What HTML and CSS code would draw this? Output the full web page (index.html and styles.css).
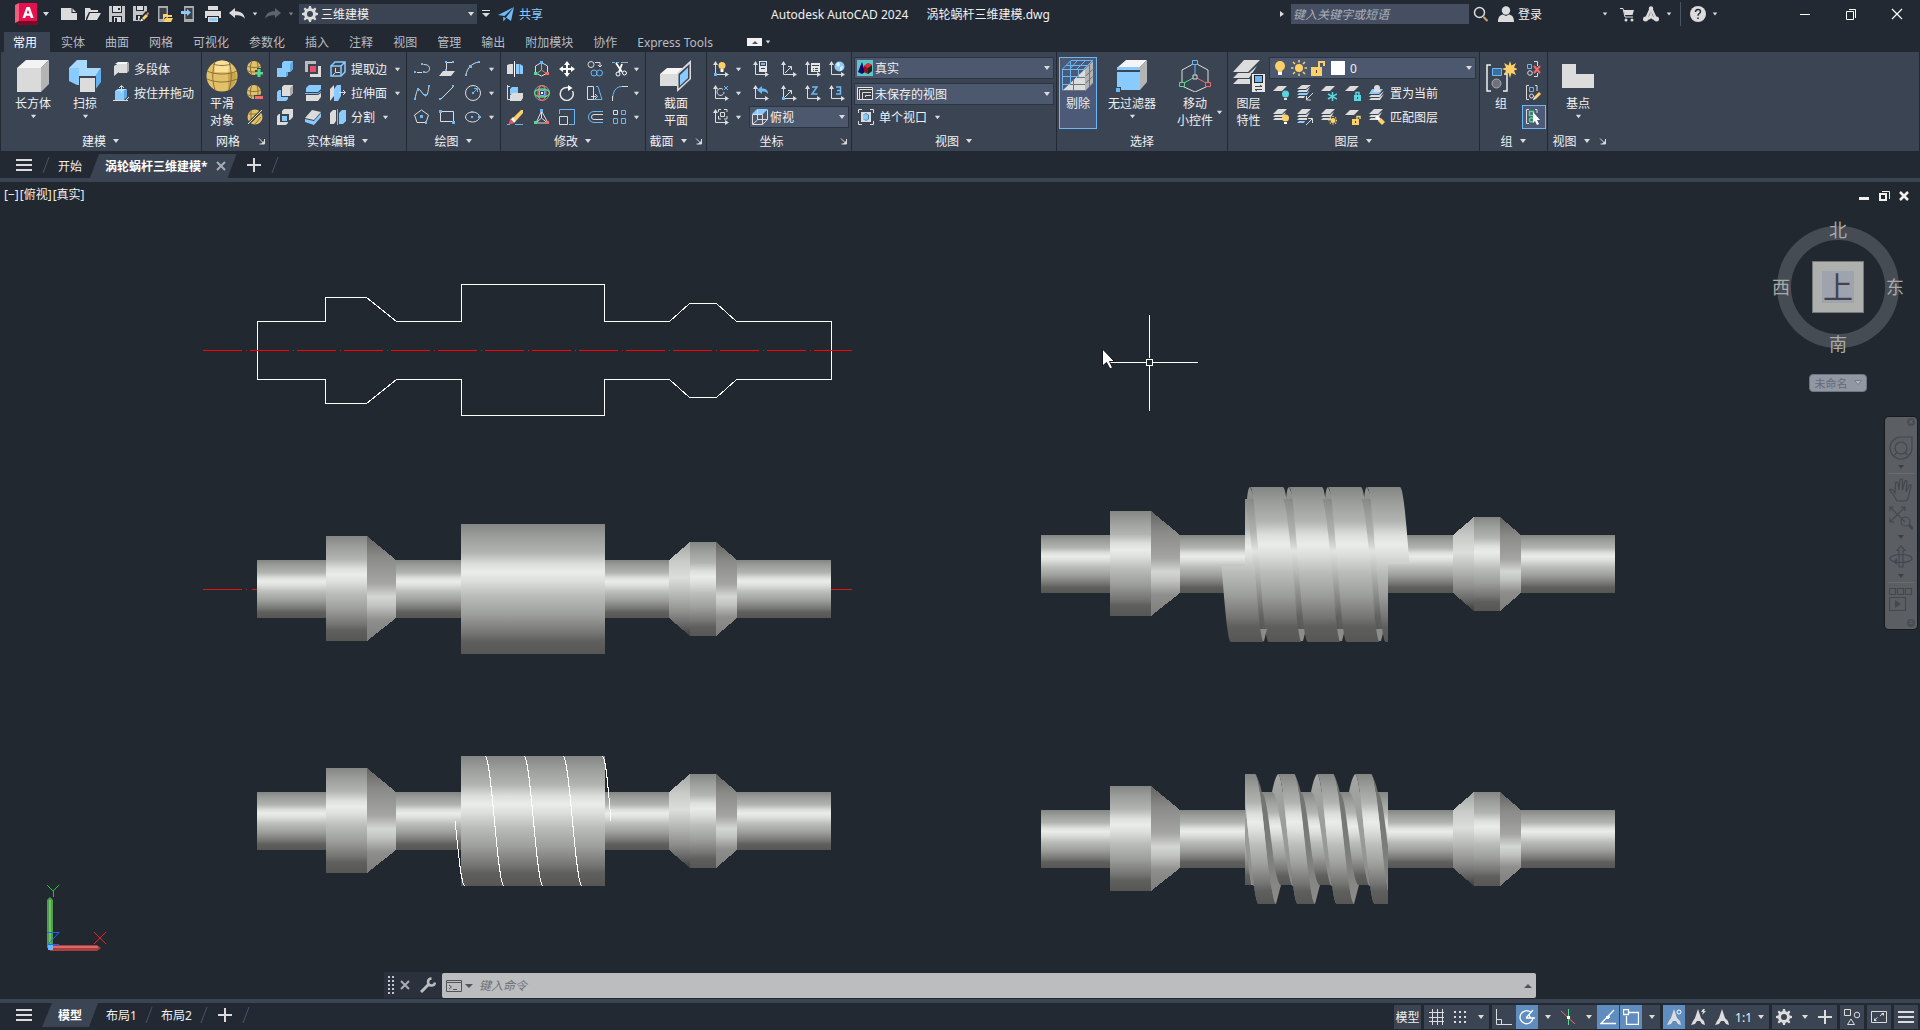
FILE: index.html
```html
<!DOCTYPE html>
<html lang="zh-CN">
  <head>
    <meta charset="utf-8" />
    <title>Autodesk AutoCAD 2024 涡轮蜗杆三维建模.dwg</title>
    <link rel="stylesheet" href="styles.css" />
  </head>
  <body>
    <!-- icon sprite -->
    <svg class="sprite" aria-hidden="true">
      <symbol id="arrow" viewBox="0 0 8 8"><path class="fw" d="M1 2h6L4 6z" /></symbol>
      <symbol id="arrow-up" viewBox="0 0 8 8"><path fill="#50545c" d="M0 6h8L4 2z" /></symbol>
      <symbol id="launcher" viewBox="0 0 8 8"><path class="sw" d="M1 1.500l5 5M6.500 2v5h-5" /><path class="fw" d="M7 3v4H3z" /></symbol>
      <symbol id="menu" viewBox="0 0 16 16"><path class="fw" d="M0 2h16v2H0zM0 7h16v2H0zM0 12h16v2H0z" /></symbol>
      <symbol id="plus" viewBox="0 0 16 16"><path class="fw" d="M7 1h2v6h6v2H9v6H7V9H1V7h6z" /></symbol>
      <symbol id="slash" viewBox="0 0 8 16"><path stroke="#4b5464" fill="none" d="M7 0L1 16" /></symbol>
      <symbol id="close" viewBox="0 0 16 16"><path stroke="#a9adb3" stroke-width="2" d="M4 4l8 8M12 4l-8 8" /></symbol>
      <symbol id="gear" viewBox="0 0 16 16">
        <path class="fw" fill-rule="evenodd" d="M7 0h2l.5 2.200 1.700.700L13 1.600 14.400 3 13.100 4.800l.700 1.700L16 7v2l-2.200.500-.700 1.700 1.300 1.800-1.400 1.400-1.800-1.300-1.700.700L9 16H7l-.5-2.200-1.700-.700L3 14.400 1.600 13l1.300-1.800-.700-1.700L0 9V7l2.200-.500.700-1.700L1.600 3 3 1.600l1.800 1.300 1.700-.700zM8 5a3 3 0 1 0 0 6 3 3 0 0 0 0-6z" />
      </symbol>

      <!-- quick access -->
      <symbol id="logo" viewBox="0 0 24 22">
        <path fill="#7a0a26" d="M2 19l5-17h16v20H3z" />
        <path fill="#f0607c" d="M0 2l4-2v18l-4 2z" />
        <path fill="#e51050" d="M4 0h18v18H4z" />
        <path fill="#fff" fill-rule="evenodd" d="M11.500 4h3.200l4 11h-3l-.7-2.200h-4L10.300 15H7.500zM13 6.500L11.700 10.600h2.700z" />
      </symbol>
      <symbol id="new" viewBox="0 0 16 16"><path class="fw" d="M0 2h11l5 5v7H0z" /><path fill="#222933" d="M10.500 2v5H16v-1h-4.500V2z" /></symbol>
      <symbol id="open" viewBox="0 0 16 16"><path class="fw" d="M0 2h5l1 2h7v2H4L1 12v2H0zM5 7h11l-4 7H2z" /></symbol>
      <symbol id="save" viewBox="0 0 16 16"><path fill="#c3c5c8" d="M0 0h16v16H0z" /><path fill="#222933" d="M3 0h10v7H3zM3 10h10v6H3z" /><path class="fw" d="M4 0h8v6H4zM5 11h7v5H5z" /><path fill="#222933" d="M9 2h2v2H9zM6 12h2v4H6z" /></symbol>
      <symbol id="saveas" viewBox="0 0 16 16"><path fill="#c3c5c8" d="M0 0h14v9l-6 6H0z" /><path fill="#222933" d="M3 0h8v5H3zM3 9h6v5H3z" /><path class="fw" d="M4 0h6v4H4zM5 10h2v4H5z" /><path fill="#222933" d="M6 13l7-8 4 3-8 9z" /><path class="fy" d="M9 12l4-4 2 2-4 4z" /><path fill="#f17a7a" d="M13.500 7.500L15 6l1 1.500-1.500 2z" /><path fill="#fff" d="M7 15.500l1.500-3 2 2z" /></symbol>
      <symbol id="webopen" viewBox="0 0 16 16"><path fill="#a9abad" d="M1 0h10v16H1z" /><path fill="#3c4149" d="M2.500 2h7v11h-7z" /><path class="fy" d="M6 8h4l1 1h4v2h-7l-2 4zM8.500 12H16l-2 4H6.500z" /></symbol>
      <symbol id="websave" viewBox="0 0 16 16"><path fill="#a9abad" d="M3 0h10v16H3z" /><path fill="#3c4149" d="M4.500 2h7v11h-7z" /><path class="fb" d="M0 5h6V3l4 3.500L6 10V8H0z" /></symbol>
      <symbol id="print" viewBox="0 0 16 16"><path class="fw" d="M3 0h10v4H3zM0 5h16v7h-2v-2H2v2H0z" /><path class="fw" d="M3 11h10v5H3z" /><path class="fb" d="M4 12h8v3H4z" /></symbol>
      <symbol id="undo" viewBox="0 0 16 16"><path class="fw" d="M0 7l6-5v3.300c6 0 9 2 10 7.700-2-3-4.500-4-10-3.800V12z" /></symbol>
      <symbol id="redo" viewBox="0 0 16 16"><path fill="#5e646d" d="M16 7l-6-5v3.300C4 5.300 1 7.300 0 13c2-3 4.500-4 10-3.800V12z" /></symbol>
      <symbol id="qatmenu" viewBox="0 0 8 8"><path class="fw" d="M0 0h8v1H0zM0 3h8L4 7z" /></symbol>
      <symbol id="plane" viewBox="0 0 16 16"><path fill="#6fbbf7" d="M0 9L16 1 6.500 10zM16 1l-3 14-5-3.500zM5 11l3 1-2.500 3.500z" /></symbol>
      <symbol id="search" viewBox="0 0 16 16"><circle cx="6.500" cy="6.500" r="5" fill="none" stroke="#dcdcdc" stroke-width="1.500" /><path stroke="#c8a86a" stroke-width="2" d="M10.500 11l4 4" /></symbol>
      <symbol id="user" viewBox="0 0 16 16"><circle cx="8" cy="4.500" r="4.200" class="fw" /><path class="fw" d="M0 16c0-5 2-7 5-7.500l3 1.500 3-1.500c3 .5 5 2.500 5 7.500z" /></symbol>
      <symbol id="cart" viewBox="0 0 16 16"><path class="sw" d="M1 2.500h3l2 8.500h8" /><path class="fw" d="M4.500 4H15l-1.500 5H6z" /><circle cx="7" cy="14" r="1.500" class="fw" /><circle cx="13" cy="14" r="1.500" class="fw" /></symbol>
      <symbol id="alogo" viewBox="0 0 16 16"><path fill="none" stroke="#dcdcdc" stroke-width="2.500" d="M8 2L3 13M8 2l5 11M2 13c4 0 5-1 6-4 1 3 2 4 6 4" /><circle cx="8" cy="2.500" r="2.200" class="fw" /><circle cx="2.500" cy="13" r="2.500" class="fw" /><circle cx="13.500" cy="13" r="2.500" class="fw" /></symbol>
      <symbol id="help" viewBox="0 0 16 16"><circle cx="8" cy="8" r="8" class="fw" /><path fill="none" stroke="#222933" stroke-width="1.500" d="M5.500 6c0-3.500 5-3.300 5-.5 0 2-2.500 2-2.500 4.200M8 11.500V13" /></symbol>
      <symbol id="win-min" viewBox="0 0 16 16"><path stroke="#fff" d="M3 8.500h10" /></symbol>
      <symbol id="win-restore" viewBox="0 0 16 16"><path fill="none" stroke="#fff" d="M3.500 5.500h7v8h-7zM6 3.500h6.500V12" /></symbol>
      <symbol id="win-close" viewBox="0 0 16 16"><path stroke="#fff" stroke-width="1.200" d="M3 3l10 10M13 3L3 13" /></symbol>

      <!-- modeling panel -->
      <symbol id="box" viewBox="0 0 32 32"><path fill="#f3f3f3" d="M0 8L9 0h23l-8 8z" /><path fill="#dadada" d="M0 8h24v24H0z" /><path fill="#b4b4b4" d="M24 8l8-8v24l-8 8z" /></symbol>
      <symbol id="sweep" viewBox="0 0 32 32"><path fill="#a9d9ff" d="M0 8L8 0h10v8h14l-6 9H10L0 10z" /><path fill="#8acbff" d="M0 8h10v9h16v12h-6v-4H8L0 21z" /><path fill="#63b0ee" d="M26 17l6-9v14l-6 8z" /><path fill="#3b4453" d="M10 16h17v16H10z" /><path class="fw" d="M11 18h15v14H11z" /></symbol>
      <symbol id="polysolid" viewBox="0 0 16 16"><path class="fw" d="M1 5l5-3v9l-5 4zM6 3h8v9H6z" /><path fill="#f5f5f5" d="M2 3l3-2h10l-1 2H6z" /><path fill="#aaa" d="M14 3l2-2v9l-2 2z" /></symbol>
      <symbol id="presspull" viewBox="0 0 16 16"><path class="fb" d="M2 6h9v9H2z" /><path fill="#b5deff" d="M2 6l3-2h9l-3 2z" /><path fill="#5fa9e4" d="M11 6l3-2v8l-3 3z" /><path class="sw" d="M8.500 8V0.500M6 3l2.500-2.500L11 3M0 15.500h15M13 15l3-3" /></symbol>

      <!-- mesh -->
      <symbol id="sphere" viewBox="0 0 32 32"><circle cx="16" cy="16" r="15.500" fill="#e3c168" /><path fill="#fbe09a" d="M8 3a15 15 0 0 1 16 0l-2 9H9z" /><path fill="#c9a550" d="M22 12l8 1a15 15 0 0 1-8 17z" /><path fill="none" stroke="#8a7238" d="M1 11c8 4 22 4 30 0M1 19c9 4 21 4 30 0M9 2C6 12 6 20 9 30M23 2c3 10 3 18 0 28M7 4c6 2 12 2 18 0" /></symbol>
      <symbol id="ball" viewBox="0 0 16 16"><circle cx="7" cy="7" r="7" fill="#e3c168" /><path fill="none" stroke="#8a7238" d="M0 5c4 2 10 2 14 0M0 9.500c4 2 10 2 14 0M4.500 1c-1.500 4-1.500 8 0 12M10 1c1.500 4 1.500 8 0 12" /></symbol>
      <symbol id="mesh-more" viewBox="0 0 16 16"><use href="#ball" width="16" height="16" /><path fill="#3b4453" d="M8 9h2V7h4v2h2v6H8z" /><path fill="#5bd98a" d="M10.500 8h3v3H16v2.500h-2.500V16h-3v-2.500H8V11h2.500z" /></symbol>
      <symbol id="mesh-less" viewBox="0 0 16 16"><use href="#ball" width="16" height="16" /><path fill="#3b4453" d="M7 10h9v5H7z" /><path fill="#f56a6a" d="M8 11h8v3H8z" /></symbol>
      <symbol id="mesh-ref" viewBox="0 0 16 16"><circle cx="8" cy="8" r="7.500" fill="#e3c168" /><path stroke="#8a7238" d="M2 5h7M4 1v9M5 13l8-8M8 15l6-7" /><path stroke="#3b4453" stroke-width="3" d="M1 15L15 1" /><path stroke="#fbe09a" d="M1 15L15 1" /></symbol>

      <!-- solid editing -->
      <symbol id="union" viewBox="0 0 16 16"><path class="fb" d="M0 7h5V2l2-2h9v8l-3 3h-2v3l-2 2H0z" /><path fill="#5fa9e4" d="M16 0v8l-3 3V3zM10 11h1v3l-2 2V11z" /></symbol>
      <symbol id="subtract" viewBox="0 0 16 16"><path class="fb" d="M0 7l2-2h9v9l-2 2H0z" /><path fill="#3b4453" d="M4 2h9v10H4z" /><path class="fw" d="M5 2l2-2h9v8l-3 3H5z" /><path fill="#aaa" d="M13 3l3-3v8l-3 3z" /></symbol>
      <symbol id="intersect" viewBox="0 0 16 16"><path class="fw" d="M0 7l2-2h9v9l-2 2H0zM5 2l2-2h9v8l-3 3H5z" /><path fill="#3b4453" d="M3 5h9v8H3z" /><path class="fb" d="M5 7h5v5H5z" /></symbol>
      <symbol id="interfere" viewBox="0 0 16 16"><path fill="#b9bbbd" d="M0 0h11v11H0z" /><path fill="#dcdcdc" d="M5 5h11v11H5z" /><path fill="#3b4453" d="M3 3h10v10H3z" /><path fill="#e8506a" d="M5 5h6v6H5z" /></symbol>
      <symbol id="slice" viewBox="0 0 16 16"><path class="fb" d="M1 3l3-3h12v4l-3 3H1z" /><path class="sb" d="M0 8.500h13l3-2" /><path class="fw" d="M1 10h12l3-2v4l-3 4H1z" /></symbol>
      <symbol id="thicken" viewBox="0 0 16 16"><path class="fw" d="M0 9l7-8 9 2-7 8z" /><path class="fb" d="M0 10l9 2 7-8v4l-7 8-9-3z" /></symbol>
      <symbol id="edges" viewBox="0 0 16 16"><path fill="none" stroke="#8acbff" stroke-width="1.500" d="M1 5h10v10H1zM1 5l4-4h10v10l-4 4M11 5l4-4" /><path class="sw" d="M5.500 7v4.500l-3 3M6 11.500h4" /></symbol>
      <symbol id="extrude" viewBox="0 0 16 16"><path class="fw" d="M0 4l4-4v11l-4 5z" /><path class="fb" d="M4 4l3-4h4v11l-3 5H4z" /><path class="sw" d="M9 7.500h6M13 5l2.500 2.500L13 10" /></symbol>
      <symbol id="separate" viewBox="0 0 16 16"><path class="fw" d="M0 4l3-3h3v11l-2 3H0z" /><path stroke="#6cb7f5" d="M7.500 0v16" /><path class="fb" d="M9 4l3-3h4v11l-3 3H9z" /></symbol>

      <!-- draw -->
      <symbol id="pline" viewBox="0 0 16 16"><path class="sw" stroke-dasharray="5 2" d="M3 11.500h6" /><path class="sw" d="M10 11.500c4 0 5.500-1.500 5.500-4s-2-4-6-4" /><path class="fk" d="M0 10h2v2H0zM7 2h2v2H7zM9 10h2v2H9z" /></symbol>
      <symbol id="poly3d" viewBox="0 0 16 16"><path class="fw" d="M4 10h12l-4 5H0z" /><path class="sw" d="M7.500 11V1.500h6" /><path class="fk" d="M6 0h2v2H6zM13 0h2v2h-2zM6 8h2v2H6z" /></symbol>
      <symbol id="arc" viewBox="0 0 16 16"><path class="sw" d="M1 14C2 7 7 2 14 1" /><path class="fk" d="M0 13h2v2H0zM4 4h3v3H4zM13 0h2v2h-2z" /></symbol>
      <symbol id="spline" viewBox="0 0 16 16"><path class="sw" d="M1 14C3 4 4 3 6 5l4 5c3 3 4-2 5-9" /><path class="fk" d="M0 13h2v2H0zM3 3h2v3H3zM10 9h3v2h-3zM14 0h2v2h-2z" /></symbol>
      <symbol id="line" viewBox="0 0 16 16"><path class="sw" d="M1 15L15 1" /><path class="fk" d="M0 13h2v2H0zM13 0h2v2h-2z" /></symbol>
      <symbol id="circle" viewBox="0 0 16 16"><circle class="sw" cx="8" cy="8" r="7.500" /><path class="sb" d="M8 8l4-4M9 3.500h3.500V7" /><path class="fk" d="M7 7h2v2H7z" /></symbol>
      <symbol id="polygon" viewBox="0 0 16 16"><path class="sw" d="M7.500 1L14.500 6 12 13.500H3L.5 6z" /><path class="fk" d="M6 6h3v3H6zM11 12h2v3h-2z" /></symbol>
      <symbol id="rect" viewBox="0 0 16 16"><path class="sw" d="M1.500 2.500h13v10h-13z" /><path class="fk" d="M0 1h3v3H0zM13 12h3v3h-3z" /></symbol>
      <symbol id="ellipse" viewBox="0 0 16 16"><ellipse class="sw" cx="7.500" cy="8" rx="7" ry="5" /><path class="fk" d="M6 7h2v2H6zM6 2h2v2H6zM13 7h3v2h-3z" /></symbol>

      <!-- modify -->
      <symbol id="mirror3d" viewBox="0 0 16 16"><path class="fw" d="M0 4l3-1h3v10H0z" /><path stroke="#fff" d="M7.500 0v16" /><path class="fb" d="M9 3h4l3 2v8H9z" /><path fill="#4f94cc" d="M12 3h1v10h-1z" /></symbol>
      <symbol id="move3d" viewBox="0 0 16 16"><path class="sw" d="M7.500 1.500l6 3.500v7l-6 3-6-3V5z" /><path class="sb" d="M7.500 2v7" /><path stroke="#5bd98a" d="M7.500 9L2 13" /><path stroke="#f56a6a" d="M7.500 9L13 13" /><path class="fk" d="M6 0h3v3H6z" /><path fill="#5bd98a" d="M0 11h3v3H0z" /><path fill="#f56a6a" d="M12 11h3v3h-3z" /></symbol>
      <symbol id="move" viewBox="0 0 16 16"><path fill="#fff" d="M8 0l3 4H9v3h3V5l4 3-4 3V9H9v3h2l-3 4-3-4h2V9H4v2L0 8l4-3v2h3V4H5z" /></symbol>
      <symbol id="copy" viewBox="0 0 16 16"><circle class="sw" cx="4" cy="3.500" r="3" /><path class="sw" d="M8 1.500h5V5M11 4l2 2 2-2" /><circle class="sb" cx="7" cy="12" r="3" /><circle class="sb" cx="12.500" cy="12" r="3" /></symbol>
      <symbol id="trim" viewBox="0 0 16 16"><path stroke="#6cb7f5" stroke-dasharray="3 1" d="M0 1.500h7" /><path stroke="#aaa" d="M9 1.500h7" /><path stroke="#fff" stroke-width="1.800" d="M4 2l6 9M10 3l-3 8" /><circle cx="6" cy="13" r="2" fill="none" stroke="#fff" /><circle cx="12.500" cy="12" r="2" fill="none" stroke="#fff" /></symbol>
      <symbol id="align3d" viewBox="0 0 16 16"><path class="sw" d="M.5 0v14.500h4M.5 1.500H3" /><path class="fb" d="M3 4l2-2h6v7H3z" /><path class="fw" d="M3 10l3-2h10v5l-2 3H3z" /></symbol>
      <symbol id="rot3d" viewBox="0 0 16 16"><circle class="sw" cx="8" cy="8" r="7.500" stroke-opacity=".5" /><ellipse cx="8" cy="8" rx="4" ry="7.500" fill="none" stroke="#f56a6a" stroke-width="1.300" /><ellipse cx="8" cy="8" rx="7.500" ry="4" fill="none" stroke="#5bd98a" stroke-width="1.300" /><path class="sb" d="M5.500 5.500h5v5h-5z" /><path fill="#fff" d="M7 7h2v2H7z" /></symbol>
      <symbol id="rotate" viewBox="0 0 16 16"><path fill="none" stroke="#e6e6e6" stroke-width="1.500" d="M13.500 6A6.500 6.500 0 1 1 8 2.500h2" /><path fill="#fff" d="M9 0l4.500 3L9 6z" /></symbol>
      <symbol id="stretch" viewBox="0 0 16 16"><path class="sw" d="M.5 1.500h6v13h-6z" /><path class="sb" d="M9 1.500h2l4 13H7" /><path class="sw" d="M4 11.500h5M8 9l2.500 2.500L8 14" /></symbol>
      <symbol id="fillet" viewBox="0 0 16 16"><path class="sb" d="M.5 16C.5 6 4 1.500 10 1.500" /><path class="sw" d="M10 1.500h6M.5 11v5" /></symbol>
      <symbol id="erase" viewBox="0 0 16 16"><path class="fy" d="M6 9L14 1l2 0v3L9 12z" /><path fill="#f6f6f6" d="M3 11l3-3 3 4-2 2z" /><path fill="#e8505a" d="M2 13l2-3 3 4-2 1H2z" /><path class="sb" d="M8 15.500h8M0 15.500h3" /></symbol>
      <symbol id="scale3d" viewBox="0 0 16 16"><path class="sw" d="M7.500 2L2 14h12zM7.500 2v7M7.500 9L2 14M7.500 9l6 5" /><path class="fk" d="M6 0h3v3H6z" /><path fill="#5bd98a" d="M0 12h3v3H0z" /><path fill="#f56a6a" d="M12 12h3v3h-3z" /></symbol>
      <symbol id="scale" viewBox="0 0 16 16"><path class="sb" d="M.5 5V.5h15v15H10" /><path class="sw" d="M.5 7.500h8v8h-8z" /></symbol>
      <symbol id="offset" viewBox="0 0 16 16"><path class="sb" d="M16 2.500H7a5.500 5.500 0 0 0 0 11h9" /><path class="sw" d="M16 5.500H7a2.500 2.500 0 0 0 0 5h9" /></symbol>
      <symbol id="array" viewBox="0 0 16 16"><path class="sw" d="M1.500 1.500h4v4h-4z" /><path class="sb" d="M9.500 1.500h4v4h-4zM1.500 9.500h4v5h-4zM9.500 9.500h4v5h-4z" /></symbol>
      <symbol id="section" viewBox="0 0 32 32"><path class="fw" d="M0 14h19v12H0z" /><path fill="#f5f5f5" d="M0 14l7-6h16l-4 6z" /><path fill="#dcdcdc" d="M17 13L31 0v19L17 32z" /><path fill="#3b4453" d="M18.500 14l11-10v14.500l-11 10z" /><path fill="#8acbff" d="M20 15l8-7.500v10.500l-8 7.500z" /></symbol>

      <!-- UCS -->
      <symbol id="ucs" viewBox="0 0 16 16"><path class="sw" d="M2.500 2v11.500H14" /><path class="fw" d="M0 4l2.500-4L5 4zM12 11l4 2.500-4 2.500z" /></symbol>
      <symbol id="ucs-light" viewBox="0 0 16 16"><use href="#ucs" width="16" height="16" /><circle class="fy" cx="9" cy="4.500" r="3.500" /><path fill="#fff" d="M7.500 8h3v3h-3z" /><path class="fk" d="M1 12h3v3H1z" /></symbol>
      <symbol id="ucs-named" viewBox="0 0 16 16"><use href="#ucs" width="16" height="16" /><path fill="#e6e6e6" d="M6 0h8v11H6z" /><path fill="#3b4453" d="M7 1h6v4H7zM8 7h4v1H8z" /><path class="fk" d="M8 2h4v2H8z" /></symbol>
      <symbol id="ucs-3d" viewBox="0 0 16 16"><use href="#ucs" width="16" height="16" /><path class="sw" d="M4 12l6-6M7 5.500h3.500V9" /></symbol>
      <symbol id="ucs-origin" viewBox="0 0 16 16"><use href="#ucs-3d" width="16" height="16" /><path class="fk" d="M1 12h3v3H1z" /></symbol>
      <symbol id="ucs-view" viewBox="0 0 16 16"><use href="#ucs" width="16" height="16" /><path fill="#e6e6e6" d="M6 2h9v9H6z" /><path stroke="#3b4453" d="M7 4.500h7M8 7.500h1M10 7.500h3M8 9.500h1M10 9.500h3" /></symbol>
      <symbol id="ucs-world" viewBox="0 0 16 16"><use href="#ucs" width="16" height="16" /><circle class="fb" cx="10.500" cy="5.500" r="5" /><path fill="#dff1ff" d="M7 3l3-2 1 3-2 2zM11 6l3-1-1 4-2 1z" /></symbol>
      <symbol id="ucs-rot" viewBox="0 0 16 16"><use href="#ucs" width="16" height="16" /><path class="sw" d="M10 4.500A3.500 3.500 0 1 0 11 7" /><path class="sb" d="M11 1l4 4M15 1l-4 4" /></symbol>
      <symbol id="ucs-prev" viewBox="0 0 16 16"><use href="#ucs" width="16" height="16" /><path fill="#6cb7f5" d="M4 5l5-4v2.500c4 0 6 1.500 6 5.500-1.500-2-3-2.500-6-2.500V9z" /></symbol>
      <symbol id="ucs-z" viewBox="0 0 16 16"><use href="#ucs" width="16" height="16" /><path fill="none" stroke="#6cb7f5" stroke-width="1.500" d="M7 2h5L7 9h5.500" /></symbol>
      <symbol id="ucs-three" viewBox="0 0 16 16"><use href="#ucs" width="16" height="16" /><path fill="none" stroke="#6cb7f5" stroke-width="1.500" d="M7 2h4.500v7H7M8 5.500h3.500" /></symbol>
      <symbol id="ucs-obj" viewBox="0 0 16 16"><use href="#ucs" width="16" height="16" /><path class="sw" d="M7.500 3.500h4v4h-4zM5.500 3V.5H8M11 .5h3V3M14 7v3h-3M5.500 7v3H8" /></symbol>
      <symbol id="cubeview" viewBox="0 0 16 16"><path class="fb" d="M0 5l5-5h11l-5 5z" /><path class="sw" d="M.5 5.500h10v10H.5zM10.500 15.500l5-5V1M5.500 1v10L1 15M5.500 10.500h10" /></symbol>

      <!-- view -->
      <symbol id="realistic" viewBox="0 0 16 16"><path fill="#5fc6c8" d="M0 0h16v16H0z" /><path fill="#0a0a6e" d="M1 12L5 2l3 10-3 2z" /><path fill="#8e1520" d="M7 6l4-3 4 2v6l-4 3-4-2z" /><path fill="#222" d="M11 8l4-3v6l-4 3z" /><path fill="#d8303a" d="M7 6l4-3 4 2-4 3z" /></symbol>
      <symbol id="viewlist" viewBox="0 0 16 16"><path fill="#3c4149" stroke="#e6e6e6" d="M.5 1.500h15v12H.5z" /><path class="sw" d="M2.500 13V3.500H16M5.500 13V6.500H14M8.500 11V9.500H14" /></symbol>
      <symbol id="viewport" viewBox="0 0 16 16"><path class="sw" d="M.5 4V.5H4M12 .5h3.500V4M15.500 12v3.500H12M4 15.500H.5V12" /><path class="fw" d="M3 3h10v10H3z" /><path fill="#3f7fb5" d="M5 6l3-2 3 2v4l-3 2-3-2z" /><path class="fb" d="M5 6l3-1 2 1v4l-2 1-3-1z" /></symbol>

      <!-- selection -->
      <symbol id="cull" viewBox="0 0 32 32"><path class="fw" d="M0 31L23 9v22z" /><path fill="#b4b4b4" d="M23 9l8-8v22l-8 8z" /><path class="sb" d="M.5 31V9L9 .5h22M.5 9.500h22M8.500 9v15M16.500 9v8M.5 16.500h16M.5 24.500h7M8 9l7-8M15 9l8-8M22 9l8-8M4 5.500h22M8.500 1v9" /><path stroke="#6b7280" d="M11.500 20v11M0 30.500h23M8 24.500h15M15 17.500h8M23.500 16l8-7M23.500 23l8-7M27.500 5v22" /></symbol>
      <symbol id="nofilter" viewBox="0 0 32 32"><path fill="#f5f5f5" d="M2 7l8-7h21l-7 7z" /><path fill="#b4b4b4" d="M24 7l7-7v22l-7 8z" /><path class="fb" d="M1 7h23v3H1zM1 12h23v18H1z" /><path fill="#3b4453" d="M0 27h5v5H0z" /><path class="fk" d="M0 28h4v4H0z" /></symbol>
      <symbol id="gizmo" viewBox="0 0 32 32"><path class="sw" d="M16 3l13 7v16l-13 6-13-6V10z" /><path stroke="#6cb7f5" d="M16 5v10" /><path stroke="#5bd98a" d="M16 17L3 24" /><path stroke="#f56a6a" d="M16 17l13 7" /><path fill="#3b4453" stroke="#6cb7f5" d="M13.500.5h5v4h-5z" /><path fill="#3b4453" stroke="#dcdcdc" d="M14 15h4v4h-4z" /><path fill="#3b4453" stroke="#5bd98a" d="M.5 22.500h5v4h-5z" /><path fill="#3b4453" stroke="#f56a6a" d="M26.500 22.500h5v4h-5z" /></symbol>

      <!-- layers -->
      <symbol id="layers32" viewBox="0 0 32 32"><path class="fw" d="M11 0h16L15 12H0zM0 18l5-5h11l8-7-8 12zM0 24l5-5h12v5z" /><path fill="#3b4453" d="M18 13h14v19H18z" /><path fill="#e6e6e6" d="M19 14h13v18H19z" /><path fill="#222" d="M21 15h9v8h-9z" /><path class="fk" d="M22 16h7v6h-7z" /><path stroke="#3b4453" d="M22 26.500h7M22 29.500h7M27 25l2 1.500M24 31l-2-1.500" /></symbol>
      <symbol id="stack" viewBox="0 0 16 16"><path class="fw" d="M5 0h9L9 5H0zM0 8l2-2h7l4-3-3 5zM0 11l2-2h8v2z" /></symbol>
      <symbol id="sheet" viewBox="0 0 16 16"><path class="fw" d="M5 1h9L9 6H0z" /></symbol>
      <symbol id="ly-off" viewBox="0 0 16 16"><use href="#sheet" width="16" height="16" /><circle fill="#59d6e0" cx="12.500" cy="9" r="3.500" /><path class="fw" d="M11 13h3v2h-3z" /></symbol>
      <symbol id="ly-iso" viewBox="0 0 16 16"><path class="fw" d="M5 0h9L9 4H0zM0 7l2-2h7l4-3-3 5z" /><path class="fb" d="M0 10l2-2h8l3-3-3 5z" /><path class="fw" d="M0 13l2-2h6l-1 2z" /><path class="sw" d="M16 8l-6 6M9.500 11v4H14" /></symbol>
      <symbol id="ly-frz" viewBox="0 0 16 16"><use href="#sheet" width="16" height="16" /><path stroke="#59d6e0" stroke-width="1.500" d="M11.500 7v9M7 9l9 5M16 9l-9 5" /></symbol>
      <symbol id="ly-lock" viewBox="0 0 16 16"><use href="#sheet" width="16" height="16" /><path fill="none" stroke="#59d6e0" stroke-width="1.500" d="M11 10V7.500h3V10" /><path fill="#59d6e0" d="M9 10h7v6H9z" /><path fill="#3b4453" d="M12 12h1v2h-1z" /></symbol>
      <symbol id="ly-cur" viewBox="0 0 16 16"><path class="fb" d="M3 4h11l-4 5H0z" /><path class="fw" d="M0 12l2-2h8l5-4-4 6zM0 15l2-2h8l5-4-4 6z" /><circle class="fw" cx="8" cy="3" r="3" /><path class="fw" d="M4 7l1-2h6l1 2z" /></symbol>
      <symbol id="ly-on" viewBox="0 0 16 16"><use href="#stack" width="16" height="16" /><circle class="fy" cx="12.500" cy="9" r="3.500" /><path fill="#fff" d="M11 13h3v2h-3z" /></symbol>
      <symbol id="ly-uniso" viewBox="0 0 16 16"><use href="#stack" width="16" height="16" /><path class="fb" d="M0 14l2-2h6l-1 2z" /><path class="sw" d="M9 16l6-6M11 9.500h4.500V14" /></symbol>
      <symbol id="ly-thaw" viewBox="0 0 16 16"><use href="#stack" width="16" height="16" /><circle class="fy" cx="12" cy="11.500" r="2.500" /><path stroke="#fdd06a" stroke-dasharray="1 1.500" stroke-width="1.500" d="M12 7v9M7.500 11.500h9M9 8.500l6 6M15 8.500l-6 6" /></symbol>
      <symbol id="ly-unlock" viewBox="0 0 16 16"><use href="#sheet" width="16" height="16" /><path fill="none" stroke="#fdd06a" stroke-width="1.500" d="M12 10V7.500h3V10" /><path class="fy" d="M7 10h7v6H7z" /><path fill="#3b4453" d="M10 12h1v2h-1z" /></symbol>
      <symbol id="ly-match" viewBox="0 0 16 16"><use href="#stack" width="16" height="16" /><path fill="#fff" d="M8 6l4 4-2 2-4-3z" /><path class="fy" d="M12 9l4 4-3 3-4-4z" /></symbol>
      <symbol id="bulb" viewBox="0 0 16 16"><circle class="fy" cx="8" cy="6" r="5" /><path class="fy" d="M5 8h6l-1 4H6z" /><path fill="#fff" d="M6 12h4v3H6z" /></symbol>
      <symbol id="sun" viewBox="0 0 16 16"><circle class="fy" cx="8" cy="8" r="4" /><path stroke="#fdd06a" stroke-width="1.500" d="M8 0v2.500M8 13.500V16M0 8h2.500M13.500 8H16M2 2l2 2M12 12l2 2M14 2l-2 2M4 12l-2 2" /></symbol>
      <symbol id="unlock" viewBox="0 0 16 16"><path fill="none" stroke="#fdd06a" stroke-width="2" d="M9 7V2h5v4" /><path class="fy" d="M1 7h11v9H1z" /><path fill="#3b4453" d="M6 10h1v3H6z" /></symbol>

      <!-- groups -->
      <symbol id="group" viewBox="0 0 32 32"><path fill="none" stroke="#f0f0f0" stroke-width="1.500" d="M6 5H2v26h4M19 14h3v17h-4" /><path fill="#3d6f9a" stroke="#6cb7f5" d="M7.500 8.500h9v7h-9z" /><circle cx="11.500" cy="23.500" r="4.500" fill="#6d727b" stroke="#a9abad" /><path fill="#fdd06a" d="M25 1l1.500 4.500L31 3l-2 4.500 4 1.500-4 1.500 2 4.500-4.500-2L25 18l-1.500-5L19 15l2-4.500-4-1.500 4-1.500L19 3l4.500 2.500z" /></symbol>
      <symbol id="ungroup" viewBox="0 0 16 16"><path class="sb" d="M1.500 3.500h4v4h-4z" /><circle class="sw" cx="4" cy="12" r="2.300" /><path class="sw" d="M8 .5h3.500V5M8 15.500h3.500V12" /><path stroke="#f56a6a" stroke-width="2" d="M8 5l6 7M14 5l-6 7" /></symbol>
      <symbol id="groupedit" viewBox="0 0 16 16"><path class="sw" d="M3 .5H.5v14H3M9 .5h2V6" /><path class="sb" d="M3.500 2.500h4v4h-4z" /><circle class="sw" cx="5.500" cy="11" r="2" /><path class="fy" d="M8 12l5-5 2 2-5 5z" /><path fill="#fff" d="M7 15l1-3 2 2z" /></symbol>
      <symbol id="groupsel" viewBox="0 0 16 16"><path class="sw" d="M3 .5H.5v14H3M9 .5h2V4" /><path fill="none" stroke="#5bd98a" stroke-width="1.500" d="M3.500 2.500h4v4h-4z" /><circle cx="5.500" cy="11" r="2" fill="none" stroke="#5bd98a" stroke-width="1.500" /><path fill="#fff" d="M7 3l7 8h-3l2 4-2 1-2-4-2 2z" /></symbol>
      <symbol id="base" viewBox="0 0 32 32"><path class="fw" d="M0 4h14v10h18v14H0z" /></symbol>

      <!-- status bar -->
      <symbol id="st-grid" viewBox="0 0 16 16"><path class="sw" d="M4.500 0v16M9.500 0v16M14.500 0v16M1 3.500h15M1 8.500h15M1 12.500h15" /></symbol>
      <symbol id="st-snap" viewBox="0 0 16 16"><path class="fw" d="M2 2h2v2H2zM7 2h2v2H7zM12 2h2v2h-2zM2 7h2v2H2zM7 7h2v2H7zM12 7h2v2h-2zM2 12h2v2H2zM7 12h2v2H7zM12 12h2v2h-2z" /></symbol>
      <symbol id="st-ortho" viewBox="0 0 16 16"><path class="sw" d="M.5 0v15.500H16M.5 10.500h5v5" /></symbol>
      <symbol id="st-polar" viewBox="0 0 16 16"><path fill="none" stroke="#fff" stroke-width="1.300" d="M12 3.500A6.500 6.500 0 1 0 14 9M7 9h9M7 9l7-8M10 6l1.500 3" /></symbol>
      <symbol id="st-iso" viewBox="0 0 16 16"><path stroke="#5bd98a" d="M8.500 0v16" /><path stroke="#f56a6a" d="M1 2l14 13" /><path fill="#fff" d="M7 7h3v3H7z" /></symbol>
      <symbol id="st-track" viewBox="0 0 16 16"><path fill="none" stroke="#fff" stroke-width="1.300" d="M14 1L1 14.500h15M8 8h2" /><path fill="#fff" d="M6 7h3v3H6z" /></symbol>
      <symbol id="st-osnap" viewBox="0 0 16 16"><path fill="none" stroke="#fff" stroke-width="1.300" d="M6 3.500h9.500v12h-12V7M.5.500h5v5h-5z" /></symbol>
      <symbol id="st-anno" viewBox="0 0 16 16"><path class="fw" d="M8 0l3 9 3 3 1 4-3-1-2-3H7l-2 3-4 1 2-4 2-3z" /></symbol>
      <symbol id="st-anno1" viewBox="0 0 16 16"><use href="#st-anno" width="16" height="16" /><circle cx="13" cy="3" r="2" fill="none" stroke="#fff" /></symbol>
      <symbol id="st-anno2" viewBox="0 0 16 16"><use href="#st-anno" width="16" height="16" /><path class="fw" d="M13 0h2l-1 2h2l-4 4 1-3h-2z" /></symbol>
      <symbol id="st-iso2" viewBox="0 0 16 16"><path class="sw" d="M.5.500h6v6h-6zM7 10l3.500 5.500h-7z" /><circle class="sw" cx="13" cy="6" r="2.800" /></symbol>
      <symbol id="st-full" viewBox="0 0 16 16"><path class="sw" d="M.5 2.500h15v11H.5zM9 7l3-2.500M3.500 11l3-2.500" /><path class="fw" d="M10 4h3v3zM3 9v3h3z" /></symbol>

      <!-- navigation bar -->
      <symbol id="nav-wheel" viewBox="0 0 24 24"><path class="sn" d="M12 1h11v11A11 11 0 1 1 12 1z" /><circle class="sn" cx="12" cy="12" r="6" /><path class="sn" d="M7.500 17l-2 2M16.500 17l2 2" /></symbol>
      <symbol id="nav-pan" viewBox="0 0 24 24"><path class="sn" d="M8 23l-4-7-3.500-4c1-1.500 3-1 5 2L6 15 6.500 5c1-1.500 2-1 2.500 0l1 7 1-10c1-1.500 2.500-1.500 2.500 0v10l2.500-9c1-1 2-.5 2 .5L17 14l3-7c1-1 2.500 0 2 1l-3 13-2 2z" /></symbol>
      <symbol id="nav-zoom" viewBox="0 0 24 24"><path class="sn" d="M1 1l15 15M16 1L1 16M1 5V1h4M12 1h4v4M1 12v4h4" /><circle class="sn" cx="16.500" cy="15.500" r="4.500" /><path stroke="#43484e" stroke-width="3" d="M20 19l4 4" /></symbol>
      <symbol id="nav-orbit" viewBox="0 0 24 24"><path class="sn" d="M12 1L8 5.500h2V22h4V5.500h2z" /><ellipse class="sn" cx="12" cy="13.500" rx="11" ry="4" /><path fill="#43484e" d="M4 17l4-4v7z" /></symbol>
      <symbol id="nav-motion" viewBox="0 0 24 24"><path class="sn" d="M.5 1.500h6v6h-6zM8.500 1.500h6v6h-6zM16.500 1.500h6v6h-6zM.5 10.500h16v13H.5z" /><path fill="#43484e" d="M6 13l6 4-6 4z" /></symbol>
    </svg>

    <header class="titlebar">
      <button class="app-btn" aria-label="应用程序菜单"><svg class="logo"><use href="#logo" /></svg><svg class="arrow"><use href="#arrow" /></svg></button>
      <nav class="quick">
        <button aria-label="新建"><svg class="icon"><use href="#new" /></svg></button>
        <button aria-label="打开"><svg class="icon"><use href="#open" /></svg></button>
        <button aria-label="保存"><svg class="icon"><use href="#save" /></svg></button>
        <button aria-label="另存为"><svg class="icon"><use href="#saveas" /></svg></button>
        <button aria-label="从云打开"><svg class="icon"><use href="#webopen" /></svg></button>
        <button aria-label="保存到云"><svg class="icon"><use href="#websave" /></svg></button>
        <button aria-label="打印"><svg class="icon"><use href="#print" /></svg></button>
        <button aria-label="放弃"><svg class="icon"><use href="#undo" /></svg></button>
        <button class="thin" aria-label="放弃列表"><svg class="arrow small"><use href="#arrow" /></svg></button>
        <button aria-label="重做"><svg class="icon"><use href="#redo" /></svg></button>
        <button class="thin" aria-label="重做列表"><svg class="arrow small dim"><use href="#arrow" /></svg></button>
      </nav>
      <label class="workspace"><svg class="icon"><use href="#gear" /></svg><select aria-label="工作空间"><option>三维建模</option></select><svg class="arrow"><use href="#arrow" /></svg></label>
      <button class="qat-more" aria-label="自定义"><svg class="arrow"><use href="#qatmenu" /></svg></button>
      <button class="share"><svg class="icon"><use href="#plane" /></svg>共享</button>
      <h1 class="doc-title"><span>Autodesk AutoCAD 2024</span><span>涡轮蜗杆三维建模.dwg</span></h1>
      <div class="info">
        <svg class="arrow right"><use href="#arrow" /></svg>
        <input class="search" type="text" placeholder="键入关键字或短语" aria-label="搜索" />
        <button aria-label="搜索"><svg class="icon"><use href="#search" /></svg></button>
        <button class="login"><svg class="icon"><use href="#user" /></svg>登录</button>
        <button class="thin login-more" aria-label="登录选项"><svg class="arrow small"><use href="#arrow" /></svg></button>
        <button class="store" aria-label="商店"><svg class="icon"><use href="#cart" /></svg></button>
        <button aria-label="Autodesk App"><svg class="icon"><use href="#alogo" /></svg></button>
        <button class="thin" aria-label="App 选项"><svg class="arrow small"><use href="#arrow" /></svg></button>
        <button class="help" aria-label="帮助"><svg class="icon"><use href="#help" /></svg></button>
        <button class="thin" aria-label="帮助选项"><svg class="arrow small"><use href="#arrow" /></svg></button>
      </div>
      <div class="win">
        <button aria-label="最小化"><svg class="icon"><use href="#win-min" /></svg></button>
        <button aria-label="还原"><svg class="icon"><use href="#win-restore" /></svg></button>
        <button aria-label="关闭"><svg class="icon"><use href="#win-close" /></svg></button>
      </div>
    </header>

    <nav class="tabs">
      <button class="tab active">常用</button>
      <button class="tab">实体</button>
      <button class="tab">曲面</button>
      <button class="tab">网格</button>
      <button class="tab">可视化</button>
      <button class="tab">参数化</button>
      <button class="tab">插入</button>
      <button class="tab">注释</button>
      <button class="tab">视图</button>
      <button class="tab">管理</button>
      <button class="tab">输出</button>
      <button class="tab">附加模块</button>
      <button class="tab">协作</button>
      <button class="tab">Express Tools</button>
      <button class="fold" aria-label="最小化功能区"><svg class="fold-icon" viewBox="0 0 15 8"><path fill="#f2f2f2" d="M0 0h15v8H0z" /><path fill="#50545c" d="M5 6h6L8 3z" /></svg><svg class="arrow small"><use href="#arrow" /></svg></button>
    </nav>

    <section class="ribbon">
      <div class="panel modeling">
        <div class="panel-body">
          <button class="big"><svg class="icon32"><use href="#box" /></svg>长方体<svg class="arrow"><use href="#arrow" /></svg></button>
          <button class="big"><svg class="icon32"><use href="#sweep" /></svg>扫掠<svg class="arrow"><use href="#arrow" /></svg></button>
          <div class="tools">
            <button class="item"><svg class="icon"><use href="#polysolid" /></svg>多段体</button>
            <button class="item"><svg class="icon"><use href="#presspull" /></svg>按住并拖动</button>
          </div>
        </div>
        <div class="panel-title"><button>建模<svg class="arrow"><use href="#arrow" /></svg></button></div>
      </div>

      <div class="panel mesh">
        <div class="panel-body">
          <button class="big"><svg class="icon32"><use href="#sphere" /></svg>平滑<br />对象</button>
          <div class="tools">
            <button aria-label="提高平滑度"><svg class="icon"><use href="#mesh-more" /></svg></button>
            <button aria-label="降低平滑度"><svg class="icon"><use href="#mesh-less" /></svg></button>
            <button aria-label="优化网格"><svg class="icon"><use href="#mesh-ref" /></svg></button>
          </div>
        </div>
        <div class="panel-title"><span>网格</span><button class="launcher" aria-label="网格设置"><svg class="arrow"><use href="#launcher" /></svg></button></div>
      </div>

      <div class="panel editing">
        <div class="panel-body tools">
          <button aria-label="并集"><svg class="icon"><use href="#union" /></svg></button>
          <button aria-label="干涉"><svg class="icon"><use href="#interfere" /></svg></button>
          <button class="item"><svg class="icon"><use href="#edges" /></svg>提取边<svg class="arrow"><use href="#arrow" /></svg></button>
          <button aria-label="差集"><svg class="icon"><use href="#subtract" /></svg></button>
          <button aria-label="剖切"><svg class="icon"><use href="#slice" /></svg></button>
          <button class="item"><svg class="icon"><use href="#extrude" /></svg>拉伸面<svg class="arrow"><use href="#arrow" /></svg></button>
          <button aria-label="交集"><svg class="icon"><use href="#intersect" /></svg></button>
          <button aria-label="加厚"><svg class="icon"><use href="#thicken" /></svg></button>
          <button class="item"><svg class="icon"><use href="#separate" /></svg>分割<svg class="arrow"><use href="#arrow" /></svg></button>
        </div>
        <div class="panel-title"><button>实体编辑<svg class="arrow"><use href="#arrow" /></svg></button></div>
      </div>

      <div class="panel draw">
        <div class="panel-body tools">
          <button aria-label="多段线"><svg class="icon"><use href="#pline" /></svg></button>
          <button aria-label="三维多段线"><svg class="icon"><use href="#poly3d" /></svg></button>
          <button aria-label="圆弧"><svg class="icon"><use href="#arc" /></svg></button>
          <button aria-label="圆弧列表"><svg class="arrow"><use href="#arrow" /></svg></button>
          <button aria-label="样条曲线"><svg class="icon"><use href="#spline" /></svg></button>
          <button aria-label="直线"><svg class="icon"><use href="#line" /></svg></button>
          <button aria-label="圆"><svg class="icon"><use href="#circle" /></svg></button>
          <button aria-label="圆列表"><svg class="arrow"><use href="#arrow" /></svg></button>
          <button aria-label="多边形"><svg class="icon"><use href="#polygon" /></svg></button>
          <button aria-label="矩形"><svg class="icon"><use href="#rect" /></svg></button>
          <button aria-label="椭圆"><svg class="icon"><use href="#ellipse" /></svg></button>
          <button aria-label="椭圆列表"><svg class="arrow"><use href="#arrow" /></svg></button>
        </div>
        <div class="panel-title"><button>绘图<svg class="arrow"><use href="#arrow" /></svg></button></div>
      </div>

      <div class="panel modify">
        <div class="panel-body tools">
          <button aria-label="三维镜像"><svg class="icon"><use href="#mirror3d" /></svg></button>
          <button aria-label="三维移动"><svg class="icon"><use href="#move3d" /></svg></button>
          <button aria-label="移动"><svg class="icon"><use href="#move" /></svg></button>
          <button aria-label="复制"><svg class="icon"><use href="#copy" /></svg></button>
          <button aria-label="修剪"><svg class="icon"><use href="#trim" /></svg></button>
          <button aria-label="修剪列表"><svg class="arrow"><use href="#arrow" /></svg></button>
          <button aria-label="三维对齐"><svg class="icon"><use href="#align3d" /></svg></button>
          <button aria-label="三维旋转"><svg class="icon"><use href="#rot3d" /></svg></button>
          <button aria-label="旋转"><svg class="icon"><use href="#rotate" /></svg></button>
          <button aria-label="拉伸"><svg class="icon"><use href="#stretch" /></svg></button>
          <button aria-label="圆角"><svg class="icon"><use href="#fillet" /></svg></button>
          <button aria-label="圆角列表"><svg class="arrow"><use href="#arrow" /></svg></button>
          <button aria-label="删除"><svg class="icon"><use href="#erase" /></svg></button>
          <button aria-label="三维缩放"><svg class="icon"><use href="#scale3d" /></svg></button>
          <button aria-label="缩放"><svg class="icon"><use href="#scale" /></svg></button>
          <button aria-label="偏移"><svg class="icon"><use href="#offset" /></svg></button>
          <button aria-label="阵列"><svg class="icon"><use href="#array" /></svg></button>
          <button aria-label="阵列列表"><svg class="arrow"><use href="#arrow" /></svg></button>
        </div>
        <div class="panel-title"><button>修改<svg class="arrow"><use href="#arrow" /></svg></button></div>
      </div>

      <div class="panel section">
        <div class="panel-body">
          <button class="big"><svg class="icon32"><use href="#section" /></svg>截面<br />平面</button>
        </div>
        <div class="panel-title"><button>截面<svg class="arrow"><use href="#arrow" /></svg></button><button class="launcher" aria-label="截面设置"><svg class="arrow"><use href="#launcher" /></svg></button></div>
      </div>

      <div class="panel coords">
        <div class="panel-body tools">
          <button aria-label="UCS 图标"><svg class="icon"><use href="#ucs-light" /></svg></button>
          <button aria-label="UCS 图标列表"><svg class="arrow"><use href="#arrow" /></svg></button>
          <button aria-label="命名 UCS"><svg class="icon"><use href="#ucs-named" /></svg></button>
          <button aria-label="UCS"><svg class="icon"><use href="#ucs-3d" /></svg></button>
          <button aria-label="UCS 特性"><svg class="icon"><use href="#ucs-view" /></svg></button>
          <button aria-label="世界"><svg class="icon"><use href="#ucs-world" /></svg></button>
          <button aria-label="绕 X 旋转"><svg class="icon"><use href="#ucs-rot" /></svg></button>
          <button aria-label="旋转列表"><svg class="arrow"><use href="#arrow" /></svg></button>
          <button aria-label="上一个"><svg class="icon"><use href="#ucs-prev" /></svg></button>
          <button aria-label="原点"><svg class="icon"><use href="#ucs-origin" /></svg></button>
          <button aria-label="Z 轴矢量"><svg class="icon"><use href="#ucs-z" /></svg></button>
          <button aria-label="三点"><svg class="icon"><use href="#ucs-three" /></svg></button>
          <button aria-label="对象"><svg class="icon"><use href="#ucs-obj" /></svg></button>
          <button aria-label="对象列表"><svg class="arrow"><use href="#arrow" /></svg></button>
          <label class="combo"><svg class="icon"><use href="#cubeview" /></svg><select aria-label="命名 UCS 组合框"><option>俯视</option></select><svg class="arrow"><use href="#arrow" /></svg></label>
        </div>
        <div class="panel-title"><span>坐标</span><button class="launcher" aria-label="坐标设置"><svg class="arrow"><use href="#launcher" /></svg></button></div>
      </div>

      <div class="panel views">
        <div class="panel-body tools">
          <label class="combo"><svg class="icon"><use href="#realistic" /></svg><select aria-label="视觉样式"><option>真实</option></select><svg class="arrow"><use href="#arrow" /></svg></label>
          <label class="combo low"><svg class="icon"><use href="#viewlist" /></svg><select aria-label="视图"><option>未保存的视图</option></select><svg class="arrow"><use href="#arrow" /></svg></label>
          <button class="item"><svg class="icon"><use href="#viewport" /></svg>单个视口<svg class="arrow"><use href="#arrow" /></svg></button>
        </div>
        <div class="panel-title"><button>视图<svg class="arrow"><use href="#arrow" /></svg></button></div>
      </div>

      <div class="panel selection">
        <div class="panel-body">
          <button class="big on"><svg class="icon32"><use href="#cull" /></svg>剔除</button>
          <button class="big filter"><svg class="icon32"><use href="#nofilter" /></svg>无过滤器<svg class="arrow"><use href="#arrow" /></svg></button>
          <button class="big giz"><svg class="icon32"><use href="#gizmo" /></svg>移动<br />小控件</button>
          <svg class="arrow giz-arrow"><use href="#arrow" /></svg>
        </div>
        <div class="panel-title"><span>选择</span></div>
      </div>

      <div class="panel layers">
        <div class="panel-body">
          <button class="big"><svg class="icon32"><use href="#layers32" /></svg>图层<br />特性</button>
          <div class="tools">
            <label class="combo"><svg class="icon"><use href="#bulb" /></svg><svg class="icon"><use href="#sun" /></svg><svg class="icon"><use href="#unlock" /></svg><span class="swatch"></span><select aria-label="图层"><option>0</option></select><svg class="arrow"><use href="#arrow" /></svg></label>
            <button aria-label="关"><svg class="icon"><use href="#ly-off" /></svg></button>
            <button aria-label="隔离"><svg class="icon"><use href="#ly-iso" /></svg></button>
            <button aria-label="冻结"><svg class="icon"><use href="#ly-frz" /></svg></button>
            <button aria-label="锁定"><svg class="icon"><use href="#ly-lock" /></svg></button>
            <button class="item"><svg class="icon"><use href="#ly-cur" /></svg>置为当前</button>
            <button aria-label="打开所有图层"><svg class="icon"><use href="#ly-on" /></svg></button>
            <button aria-label="取消隔离"><svg class="icon"><use href="#ly-uniso" /></svg></button>
            <button aria-label="解冻"><svg class="icon"><use href="#ly-thaw" /></svg></button>
            <button aria-label="解锁"><svg class="icon"><use href="#ly-unlock" /></svg></button>
            <button class="item"><svg class="icon"><use href="#ly-match" /></svg>匹配图层</button>
          </div>
        </div>
        <div class="panel-title"><button>图层<svg class="arrow"><use href="#arrow" /></svg></button></div>
      </div>

      <div class="panel groups">
        <div class="panel-body">
          <button class="big"><svg class="icon32"><use href="#group" /></svg>组</button>
          <div class="tools">
            <button aria-label="解除编组"><svg class="icon"><use href="#ungroup" /></svg></button>
            <button aria-label="组编辑"><svg class="icon"><use href="#groupedit" /></svg></button>
            <button class="on" aria-label="启用组选择"><svg class="icon"><use href="#groupsel" /></svg></button>
          </div>
        </div>
        <div class="panel-title"><button>组<svg class="arrow"><use href="#arrow" /></svg></button></div>
      </div>

      <div class="panel base">
        <div class="panel-body">
          <button class="big"><svg class="icon32"><use href="#base" /></svg>基点<svg class="arrow"><use href="#arrow" /></svg></button>
        </div>
        <div class="panel-title"><button>视图<svg class="arrow"><use href="#arrow" /></svg></button><button class="launcher" aria-label="视图设置"><svg class="arrow"><use href="#launcher" /></svg></button></div>
      </div>
    </section>

    <nav class="filetabs">
      <button class="menu-btn" aria-label="文件选项卡菜单"><svg class="icon"><use href="#menu" /></svg></button>
      <svg class="slash"><use href="#slash" /></svg>
      <button class="ftab">开始</button>
      <button class="ftab active">涡轮蜗杆三维建模*<svg class="icon"><use href="#close" /></svg></button>
      <button class="add" aria-label="新图形"><svg class="icon"><use href="#plus" /></svg></button>
      <svg class="slash"><use href="#slash" /></svg>
    </nav>

    <main class="canvas">
      <svg class="drawing" role="img" aria-label="蜗杆建模步骤">
        <defs>
          <linearGradient id="g-cyl" x2="0" y2="1">
            <stop offset="0" stop-color="#848684" /><stop offset=".1" stop-color="#9c9e9c" /><stop offset=".22" stop-color="#b2b4b2" />
            <stop offset=".31" stop-color="#dddfdd" /><stop offset=".37" stop-color="#eaece9" /><stop offset=".44" stop-color="#dcdedc" />
            <stop offset=".55" stop-color="#bbbdbb" /><stop offset=".7" stop-color="#9c9e9b" /><stop offset=".84" stop-color="#757573" />
            <stop offset=".9" stop-color="#5f5f5e" /><stop offset="1" stop-color="#565655" />
          </linearGradient>
          <linearGradient id="g-cone" x2="0" y2="1">
            <stop offset="0" stop-color="#626361" /><stop offset=".2" stop-color="#8a8b89" /><stop offset=".45" stop-color="#a5a6a3" />
            <stop offset=".58" stop-color="#d4d6d3" /><stop offset=".66" stop-color="#c3c5c2" /><stop offset=".8" stop-color="#8e8f8d" /><stop offset="1" stop-color="#7d7d7b" />
          </linearGradient>
          <linearGradient id="g-cone2" x2="0" y2="1">
            <stop offset="0" stop-color="#a3a5a2" /><stop offset=".2" stop-color="#c8cac8" /><stop offset=".38" stop-color="#dcdedc" />
            <stop offset=".55" stop-color="#b9bbb9" /><stop offset=".75" stop-color="#8d8e8c" /><stop offset=".9" stop-color="#5f605f" /><stop offset="1" stop-color="#3c3d3d" />
          </linearGradient>
          <linearGradient id="g-gap" x2="0" y2="1">
            <stop offset="0" stop-color="#888a88" /><stop offset=".25" stop-color="#b0b2b0" /><stop offset=".4" stop-color="#e2e4e1" />
            <stop offset=".6" stop-color="#acaeac" /><stop offset=".8" stop-color="#7c7d7b" /><stop offset=".9" stop-color="#626261" /><stop offset="1" stop-color="#5a5a59" />
          </linearGradient>
          <linearGradient id="g-wall" x2="0" y2="1">
            <stop offset="0" stop-color="#a3a5a3" /><stop offset=".5" stop-color="#9a9c99" /><stop offset="1" stop-color="#7e807e" />
          </linearGradient>
          <linearGradient id="g-wall2" x2="0" y2="1">
            <stop offset="0" stop-color="#6e706e" /><stop offset=".6" stop-color="#7c7e7b" /><stop offset="1" stop-color="#8c8d8b" />
          </linearGradient>

          <!-- turned shaft, axis on y = 0 -->
          <g id="shaft" shape-rendering="crispEdges">
            <path fill="url(#g-cyl)" d="M0-29h574v58H0z" />
            <path fill="url(#g-cyl)" d="M69-53h41V52H69z" />
            <path fill="url(#g-cone)" d="M110-53l29 24v58l-29 23z" />
            <path fill="url(#g-cone2)" d="M412-29l21-18v94l-21-18z" />
            <path fill="url(#g-cyl)" d="M433-47h26v94h-26z" />
            <path fill="url(#g-cone)" d="M459-47l21 18v58l-21 18z" />
          </g>
          <path id="band" fill="url(#g-cyl)" d="M0-77C7-77 12 78 19 78h33C45 78 40-77 33-77z" />
          <g id="ridge">
            <path fill="#8f918f" d="M0-77C-2-77-3-66-3-65H5z" />
            <path fill="url(#g-gap)" d="M-6-65C0-60 7 65 14 65h7C14 65 6-65 0-65z" />
            <path fill="#8c8d8b" d="M48 65h8l-3 12h-5z" />
            <use href="#band" />
          </g>
          <g id="thread">
            <path fill="url(#g-wall)" d="M0-65C-3-62-5-52-6-47C2-47 9 47 15 47L20 65C13 65 7-65 0-65z" />
            <path fill="url(#g-wall2)" d="M16-65C20-60 22-50 23-46C30-46 34 46 42 46L37 65C29 65 23-65 16-65z" />
            <path fill="url(#g-cyl)" d="M0-65C7-65 13 65 20 65h17C30 65 23-65 16-65z" />
          </g>
          <clipPath id="c-lead"><path d="M1216 384h80v90h-80z" /></clipPath>
          <clipPath id="c-ridge"><path d="M1245 300h170v80h-27v95h-143z" /></clipPath>
          <clipPath id="c-thread"><path d="M1245 592h143v130h-143z" /></clipPath>
        </defs>

        <!-- profile -->
        <g fill="none" shape-rendering="crispEdges">
          <path stroke="#fff" d="M257.500 139.500h68v-24h41l30 24h65v-37h143v37h65l20-18h27l20 18h95v58h-95l-20 18h-27l-20-18h-65v36h-143v-36h-65l-30 24h-41v-24h-68z" />
          <path stroke="#f00" stroke-dasharray="39 4 1 3" d="M203 168.500h649" />
          <path stroke="#e01414" stroke-dasharray="39 4 1 5" d="M203 407.500h54M831 407.500h21" />
        </g>

        <use href="#shaft" x="257" y="407" />
        <path fill="url(#g-cyl)" d="M461 342h144v130H461z" />

        <use href="#shaft" x="257" y="639" />
        <path fill="url(#g-cyl)" d="M461 574h144v130H461z" />
        <g fill="none" stroke="#fff" shape-rendering="crispEdges">
          <path d="M485 574c7 0 12 130 19 130M524 574c7 0 12 130 19 130M563 574c7 0 12 130 19 130" />
          <path d="M455 639c4 35 6 65 10 65M602 574c4 0 6 30 9 65" />
        </g>

        <use href="#shaft" x="1041" y="382" />
        <path fill="url(#g-cyl)" d="M1245 317h143v131h-143z" />
        <g clip-path="url(#c-ridge)">
          <use href="#ridge" x="1250" y="382" />
          <use href="#ridge" x="1289" y="382" />
          <use href="#ridge" x="1328" y="382" />
          <use href="#ridge" x="1367" y="382" />
        </g>
        <g clip-path="url(#c-lead)">
          <path fill="#8c8d8b" d="M1259 447h8l-3 12h-5z" />
          <use href="#band" x="1212" y="382" />
        </g>

        <use href="#shaft" x="1041" y="657" />
        <path fill="url(#g-cyl)" d="M1245 610h143v93h-143z" />
        <g clip-path="url(#c-thread)">
          <path fill="#8c8e8b" d="M1245 656h4l8 47h-6z" />
          <use href="#thread" x="1239" y="657" />
          <use href="#thread" x="1278" y="657" />
          <use href="#thread" x="1317" y="657" />
          <use href="#thread" x="1355" y="657" />
        </g>

        <!-- crosshair and pointer -->
        <g fill="none" stroke="#fff" shape-rendering="crispEdges">
          <path d="M1149.500 133v43M1149.500 183v46M1110 180.500h36M1153 180.500h45M1146.500 177.500h6v6h-6z" />
        </g>
        <path fill="#fff" stroke="#10141a" d="M1102.500 167v17l4-3.500 3.500 6.500 2.500-1.500-3-6h5z" />

        <!-- UCS icon -->
        <path fill="#4f9e4d" d="M47 718l3-3 3 3v48h-6z" />
        <path fill="#6fc26a" d="M49 718h2v48h-2z" />
        <path fill="#a83e3e" d="M50 763h47l4 3-4 3H50z" />
        <path fill="#d86a6a" d="M53 764h45v2H53z" />
        <path fill="#6cb7f5" d="M48 763h5v5h-5z" />
        <path fill="none" stroke="#1ec81e" d="M47 703l6 6 6-6M53.500 709v6" />
        <path fill="none" stroke="#e82020" d="M94 750l12 12M106 750l-12 12" />
        <path fill="none" stroke="#1768ff" d="M47 750.500h12L48 762.500h11" />
      </svg>

      <div class="view-label"><button>[−]</button><button>[俯视]</button><button>[真实]</button></div>

      <div class="mdi">
        <button aria-label="最小化"><svg class="icon" viewBox="0 0 16 16"><path fill="#f0f0f0" d="M3 9h10v3H3z" /></svg></button>
        <button aria-label="还原"><svg class="icon" viewBox="0 0 16 16"><path fill="none" stroke="#f0f0f0" stroke-width="2" d="M4 6h6v6H4z" /><path fill="none" stroke="#f0f0f0" d="M6 3.500h7.500V11" /></svg></button>
        <button aria-label="关闭"><svg class="icon" viewBox="0 0 16 16"><path stroke="#f0f0f0" stroke-width="2.500" d="M4 4l8 8M12 4l-8 8" /></svg></button>
      </div>

      <div class="viewcube">
        <span class="north">北</span>
        <span class="west">西</span>
        <div class="ring"><button class="face"><span>上</span></button></div>
        <span class="east">东</span>
        <span class="south">南</span>
      </div>
      <button class="wcs">未命名<svg class="wcs-arrow" viewBox="0 0 8 6"><path fill="#b4b8c2" stroke="#787e8c" d="M.5.500h7L4 4.500z" /></svg></button>

      <div class="navbar">
        <span class="nav-dot">×</span>
        <button aria-label="控制盘"><svg class="icon24"><use href="#nav-wheel" /></svg><svg class="nav-arrow" viewBox="0 0 8 8"><path fill="#3c4147" d="M1 2h6L4 6z" /></svg></button>
        <button class="ruled" aria-label="平移"><svg class="icon24"><use href="#nav-pan" /></svg></button>
        <button aria-label="缩放"><svg class="icon24"><use href="#nav-zoom" /></svg><svg class="nav-arrow" viewBox="0 0 8 8"><path fill="#3c4147" d="M1 2h6L4 6z" /></svg></button>
        <button aria-label="动态观察"><svg class="icon24"><use href="#nav-orbit" /></svg><svg class="nav-arrow" viewBox="0 0 8 8"><path fill="#3c4147" d="M1 2h6L4 6z" /></svg></button>
        <button class="ruled" aria-label="ShowMotion"><svg class="icon24"><use href="#nav-motion" /></svg></button>
        <span class="nav-dot">=</span>
      </div>

      <div class="cmd">
        <div class="cmd-tools">
          <svg class="grip" viewBox="0 0 6 18"><path fill="none" stroke="#c4c7cb" stroke-width="2" stroke-dasharray="2 2" d="M1 0v18M5 0v18" /></svg>
          <button aria-label="关闭命令行"><svg class="icon"><use href="#close" /></svg></button>
          <button aria-label="自定义"><svg class="icon" viewBox="0 0 16 16"><path stroke="#b9bcc0" stroke-width="3" d="M1 15l8-8" /><path fill="none" stroke="#b9bcc0" stroke-width="2.500" d="M11.500 1.500a3.500 3.500 0 1 0 3.500 4" /></svg></button>
        </div>
        <div class="cmd-line">
          <svg class="prompt" viewBox="0 0 16 12"><path fill="none" stroke="#50545c" d="M.5.500h15v11H.5zM0 2.500h16M3 5l2.500 2L3 9M7 9.500h4" /></svg>
          <svg class="arrow" viewBox="0 0 8 8"><path fill="#50545c" d="M0 2h8L4 6z" /></svg>
          <input type="text" placeholder="键入命令" aria-label="命令" />
          <svg class="arrow"><use href="#arrow-up" /></svg>
        </div>
      </div>
    </main>

    <footer class="status">
      <nav class="layouts">
        <button class="menu-btn" aria-label="布局菜单"><svg class="icon"><use href="#menu" /></svg></button>
        <button class="ltab active">模型</button>
        <button class="ltab">布局1</button>
        <svg class="slash"><use href="#slash" /></svg>
        <button class="ltab">布局2</button>
        <svg class="slash"><use href="#slash" /></svg>
        <button class="add" aria-label="新建布局"><svg class="icon"><use href="#plus" /></svg></button>
        <svg class="slash"><use href="#slash" /></svg>
      </nav>
      <div class="toggles">
        <div class="cluster"><button class="model">模型</button></div>
        <div class="cluster">
          <button aria-label="栅格"><svg class="icon"><use href="#st-grid" /></svg></button>
          <button aria-label="捕捉"><svg class="icon"><use href="#st-snap" /></svg></button>
          <button class="drop" aria-label="捕捉选项"><svg class="arrow"><use href="#arrow" /></svg></button>
        </div>
        <div class="cluster">
          <button aria-label="正交"><svg class="icon"><use href="#st-ortho" /></svg></button>
          <button class="lit" aria-label="极轴追踪"><svg class="icon"><use href="#st-polar" /></svg></button>
          <button class="drop" aria-label="极轴选项"><svg class="arrow"><use href="#arrow" /></svg></button>
          <button aria-label="等轴测草图"><svg class="icon"><use href="#st-iso" /></svg></button>
          <button class="drop" aria-label="等轴测选项"><svg class="arrow"><use href="#arrow" /></svg></button>
          <button class="lit" aria-label="对象捕捉追踪"><svg class="icon"><use href="#st-track" /></svg></button>
          <button class="lit" aria-label="对象捕捉"><svg class="icon"><use href="#st-osnap" /></svg></button>
          <button class="drop" aria-label="对象捕捉选项"><svg class="arrow"><use href="#arrow" /></svg></button>
        </div>
        <div class="cluster">
          <button class="lit" aria-label="注释可见性"><svg class="icon"><use href="#st-anno1" /></svg></button>
          <button aria-label="自动缩放"><svg class="icon"><use href="#st-anno2" /></svg></button>
          <button class="scale"><svg class="icon"><use href="#st-anno" /></svg>1:1<svg class="arrow"><use href="#arrow" /></svg></button>
        </div>
        <div class="cluster">
          <button aria-label="切换工作空间"><svg class="icon"><use href="#gear" /></svg></button>
          <button class="drop" aria-label="工作空间选项"><svg class="arrow"><use href="#arrow" /></svg></button>
          <button aria-label="注释监视器"><svg class="icon"><use href="#plus" /></svg></button>
        </div>
        <div class="cluster"><button aria-label="隔离对象"><svg class="icon"><use href="#st-iso2" /></svg></button></div>
        <div class="cluster"><button aria-label="全屏显示"><svg class="icon"><use href="#st-full" /></svg></button></div>
        <div class="cluster"><button aria-label="自定义"><svg class="icon"><use href="#menu" /></svg></button></div>
      </div>
    </footer>
  </body>
</html>
```
FILE: styles.css
```css
* {
  box-sizing: border-box;
}

body {
  margin: 0;
  height: 100vh;
  display: flex;
  flex-direction: column;
  overflow: hidden;
  background-color: #222933;
  color: #f0f0f0;
  font: 12px/17px "Noto Sans", "Noto Sans CJK SC", sans-serif;
}

button,
input,
select {
  margin: 0;
  padding: 0;
  border: 0;
  border-radius: 0;
  background: none;
  color: inherit;
  font: inherit;
}

button {
  display: flex;
  align-items: center;
  justify-content: center;
  white-space: nowrap;
}

select {
  appearance: none;
  flex: 1;
  min-width: 0;
  outline: none;
}

svg {
  flex: none;
  display: block;
}

.sprite {
  position: absolute;
  width: 0;
  height: 0;
}

/* icon paints */
.fw { fill: #dcdcdc; }
.fb { fill: #8acbff; }
.fk { fill: #6cb7f5; }
.fy { fill: #fdd06a; }
.sw { fill: none; stroke: #dcdcdc; }
.sb { fill: none; stroke: #6cb7f5; }
.sn { fill: none; stroke: #43484e; stroke-width: 1.2; }

.icon { width: 16px; height: 16px; }
.icon24 { width: 24px; height: 24px; }
.icon32 { width: 32px; height: 32px; }
.arrow { width: 8px; height: 8px; }
.arrow.small { width: 6px; height: 6px; }
.arrow.dim { opacity: 0.5; }
.arrow.right { transform: rotate(-90deg); }
.slash { width: 8px; height: 16px; }

/* title bar */
.titlebar {
  display: flex;
  align-items: center;
  height: 32px;
  padding: 0 0 4px 15px;
}

.titlebar button {
  height: 24px;
  min-width: 24px;
}

.titlebar .thin {
  min-width: 12px;
}

.logo {
  width: 24px;
  height: 22px;
}

.app-btn {
  gap: 3px;
}

.quick {
  display: flex;
  margin-left: 7px;
}

.workspace {
  display: flex;
  align-items: center;
  gap: 3px;
  width: 178px;
  height: 20px;
  margin-left: 2px;
  padding: 0 2px 0 3px;
  background-color: #3b4453;
}

.titlebar .qat-more {
  min-width: 18px;
}

.share {
  gap: 5px;
  margin-left: 3px;
  color: #8acbff;
}

.doc-title {
  flex: 1;
  display: flex;
  justify-content: center;
  gap: 18px;
  margin: 0;
  font-size: 12px;
  font-weight: 400;
}

.info {
  display: flex;
  align-items: center;
}

.search {
  width: 178px;
  height: 20px;
  margin-left: 5px;
  padding: 0 2px;
  background-color: #464f62;
}

.search::placeholder {
  color: #a9afba;
  font-style: italic;
  opacity: 1;
}

.login {
  gap: 4px;
  margin-left: 5px;
}

.login-more {
  margin-left: 57px;
}

.store {
  margin-left: 4px;
}

.titlebar .help {
  margin-left: 5px;
  padding-left: 5px;
  min-width: 29px;
  border-left: 1px solid #4b5464;
}

.win {
  display: flex;
  margin-left: 61px;
}

.titlebar .win button {
  min-width: 46px;
}

/* ribbon tabs */
.tabs {
  display: flex;
  height: 20px;
  padding-left: 4px;
}

.tab {
  padding: 0 10px;
  color: #b9bcc1;
}

.tab.active {
  padding: 0 13px 0 9px;
  margin-right: 1px;
  background-color: #3b4453;
  color: #fff;
}

.fold {
  margin-left: 24px;
  gap: 3px;
}

.fold-icon {
  width: 15px;
  height: 8px;
}

/* ribbon */
.ribbon {
  display: flex;
  height: 99px;
  margin: 0 1px;
  background-color: #3b4453;
}

.panel {
  display: flex;
  flex-direction: column;
  border-right: 1px solid #222933;
}

.panel-body {
  display: flex;
  height: 77px;
  padding-top: 5px;
}

.panel-body button .arrow,
.giz-arrow {
  width: 7px;
  height: 7px;
}

.panel-title {
  display: flex;
  align-items: center;
  justify-content: center;
  height: 22px;
  padding-top: 2px;
  text-align: center;
}

.panel-title > :first-child {
  flex: 1;
}

.panel-title button {
  gap: 6px;
}

.panel-title .launcher {
  width: 15px;
}

.tools {
  display: grid;
  grid-template-rows: repeat(3, 24px);
}

.big {
  flex-direction: column;
  justify-content: flex-start;
  height: 72px;
  padding-top: 3px;
}

.big .icon32 {
  margin-bottom: 3px;
}

.big .arrow {
  margin-top: 1px;
}

.item {
  justify-content: flex-start;
  gap: 5px;
}

.item .arrow {
  margin-left: 2px;
}

.combo {
  display: flex;
  align-items: center;
  gap: 2px;
  height: 22px;
  padding: 0 2px;
  border: 1px solid #2c3441;
  background-color: #4c586e;
}

.combo.low {
  align-self: end;
}

.on {
  border: 1px solid #6cb7f5;
  background-color: #4c5a78;
}

.modeling { width: 201px; }
.modeling .panel-body { padding-left: 6px; }
.modeling .big { width: 52px; }
.modeling .item { padding-left: 2px; }

.mesh { width: 68px; }
.mesh .big { width: 40px; }
.mesh .tools { width: 26px; }

.editing { width: 137px; }
.editing .tools { grid-template-columns: 30px 26px 1fr; }
.editing .item { padding-left: 4px; }

.draw { width: 94px; }
.draw .tools { grid-template-columns: 26px 24px 28px 9px; padding-left: 2px; }

.modify { width: 145px; }
.modify .tools { grid-template-columns: 27px 28px 22px 34px 16px 17px; }

.section { width: 61px; }
.section .big { width: 60px; }

.coords { width: 145px; }
.coords .tools { grid-template-columns: 28px 6px 40px 16px 32px 16px; }
.coords .combo { grid-column: 3 / 7; width: 100px; margin: 1px 0 0 8px; }

.views { width: 205px; }
.views .tools { padding: 5px 2px 0; }
.views .item { padding-left: 4px; }

.selection { width: 171px; }
.selection .panel-body { padding-left: 2px; }
.selection .on { width: 38px; padding-top: 2px; }
.selection .filter { width: 70px; }
.selection .giz { width: 56px; }
.giz-arrow { margin-top: 52px; margin-left: -7px; }

.layers { width: 252px; }
.layers .big { width: 41px; }
.layers .tools { grid-template-columns: repeat(4, 24px) 111px; }
.layers .combo { grid-column: 1 / 6; gap: 3px; }
.layers .item { padding-left: 4px; }

.swatch {
  width: 14px;
  height: 14px;
  margin: 0 2px;
  background-color: #fff;
}

.groups { width: 68px; }
.groups .big { width: 42px; }
.groups .tools { width: 24px; }

.base { width: 62px; border-right: 0; }
.base .big { width: 60px; }

/* file tabs */
.filetabs {
  display: flex;
  align-items: center;
  height: 31px;
  border-bottom: 4px solid #3b4453;
}

.menu-btn {
  width: 42px;
  padding-left: 6px;
}

.ftab {
  height: 24px;
  margin-top: 3px;
  padding: 0 8px;
}

.ftab.active {
  gap: 5px;
  padding: 0 8px 0 15px;
  background-color: #3b4453;
  clip-path: polygon(9px 0, 100% 0, calc(100% - 9px) 100%, 0 100%);
  color: #fff;
  font-weight: 700;
}

.add {
  width: 34px;
}

/* drawing area */
.canvas {
  position: relative;
  flex: 1;
  min-height: 0;
  background-color: #212830;
}

.drawing {
  width: 100%;
  height: 100%;
}

.view-label {
  position: absolute;
  top: 4px;
  left: 4px;
  display: flex;
  gap: 1px;
}

.mdi {
  position: absolute;
  top: 6px;
  right: 8px;
  display: flex;
  gap: 4px;
}

.viewcube {
  position: absolute;
  top: 38px;
  right: 15px;
  display: grid;
  grid-template-columns: 20px 94px 20px;
  grid-template-rows: 20px 94px 20px;
  place-items: center;
  color: #a9aaa8;
  font-size: 18px;
  line-height: 20px;
}

.north,
.south {
  grid-column: 1 / 4;
}

.north,
.south,
.east,
.west {
  z-index: 1;
}

.ring {
  display: flex;
  align-items: center;
  justify-content: center;
  width: 122px;
  height: 122px;
  border: 14px solid #454c54;
  border-radius: 50%;
}

.face {
  width: 52px;
  height: 52px;
  border: 1px solid #77797a;
  background-color: #aeb0ae;
  color: #42454f;
  font-size: 30px;
  line-height: 32px;
}

.face span {
  width: 32px;
  height: 32px;
  background-color: #9fa3ae;
}

.wcs {
  position: absolute;
  top: 192px;
  right: 53px;
  gap: 6px;
  width: 58px;
  height: 18px;
  border: 1px solid #6f7583;
  border-radius: 4px;
  background-color: #9297a4;
  color: #646a78;
  font-size: 11px;
}

.wcs-arrow {
  width: 8px;
  height: 6px;
}

.navbar {
  position: absolute;
  top: 235px;
  right: 3px;
  display: flex;
  flex-direction: column;
  align-items: center;
  width: 32px;
  height: 212px;
  border-radius: 4px;
  background-color: #5b5f63;
  box-shadow: 0 0 0 1px #161b22;
}

.navbar button {
  flex-direction: column;
  width: 26px;
  gap: 3px;
  padding: 2px 0;
}

.navbar .ruled {
  border-top: 1px solid #6a6e72;
  padding-top: 4px;
}

.nav-arrow {
  width: 8px;
  height: 8px;
}

.nav-dot {
  align-self: flex-end;
  width: 8px;
  height: 8px;
  margin: 1px 2px 8px;
  border-radius: 50%;
  background-color: #484d52;
  color: #6a6e72;
  font-size: 8px;
  line-height: 8px;
  text-align: center;
}

.nav-dot:last-child {
  margin: auto 2px 2px;
}

/* command line */
.cmd {
  position: absolute;
  bottom: 1px;
  left: 20%;
  display: flex;
  width: 60%;
  height: 26px;
}

.cmd-tools {
  display: flex;
  align-items: center;
  gap: 3px;
  width: 58px;
  padding-left: 4px;
  background-color: #2a303c;
}

.grip {
  width: 6px;
  height: 18px;
}

.cmd-tools button + button {
  margin-left: 4px;
}

.cmd-line {
  flex: 1;
  display: flex;
  align-items: center;
  gap: 3px;
  margin-top: 1px;
  padding: 0 4px;
  border-radius: 2px;
  background-color: #bcbdbf;
}

.prompt {
  width: 16px;
  height: 12px;
}

.cmd-line input {
  flex: 1;
  margin-left: 3px;
  outline: none;
  color: #222933;
}

.cmd-line input::placeholder {
  color: #6d7076;
  font-style: italic;
  opacity: 1;
}

/* status bar */
.status {
  display: flex;
  justify-content: space-between;
  height: 31px;
  border-top: 4px solid #3b4453;
}

.layouts {
  display: flex;
  align-items: center;
  height: 24px;
}

.ltab {
  height: 24px;
  padding: 0 8px;
}

.ltab.active {
  padding: 0 16px;
  background-color: #3b4453;
  clip-path: polygon(10px 0, 100% 0, calc(100% - 9px) 100%, 0 100%);
  color: #fff;
  font-weight: 700;
}

.toggles {
  display: flex;
  gap: 3px;
  padding: 2px 2px 1px 0;
}

.cluster {
  display: flex;
  background-color: #3b4453;
}

.cluster button {
  width: 24px;
}

.cluster .drop {
  width: 17px;
}

.cluster .model {
  width: 27px;
}

.cluster .lit {
  width: 22px;
  margin-right: 1px;
  background-color: #5f8dc0;
}

.cluster .scale {
  width: auto;
  gap: 5px;
  padding: 0 4px;
}
```
